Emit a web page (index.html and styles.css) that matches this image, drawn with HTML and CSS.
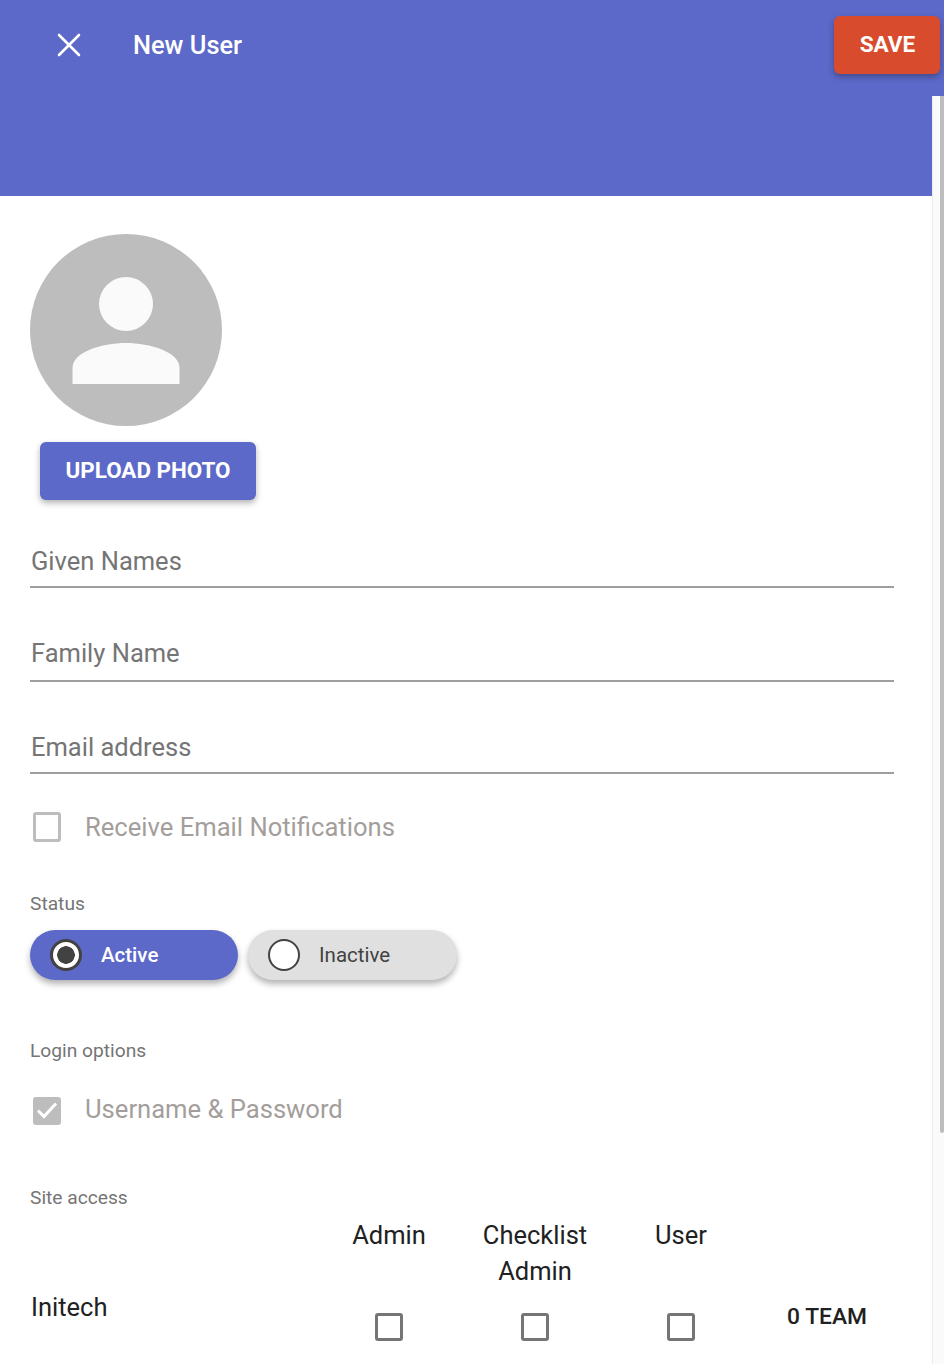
FILE: index.html
```html
<!DOCTYPE html>
<html lang="en">
<head>
    <meta charset="UTF-8">
    <meta name="viewport" content="width=device-width, initial-scale=1.0">
    <title>New User</title>
    <link rel="stylesheet" href="styles.css">
</head>
<body>

    <div class="topbar">
        <svg class="close-icon" width="24" height="24" viewBox="0 0 24 24">
            <path d="M2 2L22 22M22 2L2 22" fill="none" stroke="#fff" stroke-width="2.6" stroke-linecap="round"/>
        </svg>
        <div class="topbar-title">New User</div>
        <button class="save-btn">SAVE</button>
    </div>

    <div class="page">
        <div class="content">
            <div class="band"></div>

            <div class="form">
                <svg class="avatar" width="192" height="192" viewBox="0 0 192 192">
                    <circle cx="96" cy="96" r="96" fill="#bdbdbd"/>
                    <circle cx="96" cy="70" r="27" fill="#fafafa"/>
                    <path d="M42.5 150V134C42.5 118 72 109 96 109S149.5 118 149.5 134V150Z" fill="#fafafa"/>
                </svg>

                <button class="upload-btn">UPLOAD PHOTO</button>

                <div class="field field-given">Given Names</div>
                <div class="field field-family">Family Name</div>
                <div class="field field-email">Email address</div>

                <div class="check-row check-notify">
                    <span class="box box-light"></span>
                    <span class="check-label">Receive Email Notifications</span>
                </div>

                <div class="section-label label-status">Status</div>
                <div class="pills">
                    <div class="pill pill-on">
                        <span class="radio radio-on"></span>
                        Active
                    </div>
                    <div class="pill pill-off">
                        <span class="radio"></span>
                        Inactive
                    </div>
                </div>

                <div class="section-label label-login">Login options</div>
                <div class="check-row check-login">
                    <span class="box box-checked">
                        <svg width="28" height="28" viewBox="0 0 28 28">
                            <path d="M5 13.5L11 19.5L23 6.5" fill="none" stroke="#fff" stroke-width="3"/>
                        </svg>
                    </span>
                    <span class="check-label">Username &amp; Password</span>
                </div>

                <div class="section-label label-site">Site access</div>
                <div class="site-grid">
                    <div></div>
                    <div class="role">Admin</div>
                    <div class="role">Checklist Admin</div>
                    <div class="role">User</div>
                    <div></div>

                    <div class="site-name">Initech</div>
                    <div class="cell"><span class="box box-dark"></span></div>
                    <div class="cell"><span class="box box-dark"></span></div>
                    <div class="cell"><span class="box box-dark"></span></div>
                    <div class="team">0 TEAM</div>
                </div>
            </div>
        </div>

        <div class="scrollbar">
            <div class="thumb"></div>
        </div>
    </div>

</body>
</html>
```

FILE: styles.css
```css
body {
    font-family: Roboto, "Liberation Sans", sans-serif;
    background-color: #fff;
    margin: 0;
    height: 1364px;
    overflow: hidden;
}

button {
    font-family: inherit;
    border: none;
    color: #fff;
    font-weight: 700;
    cursor: pointer;
}

.topbar {
    display: flex;
    align-items: flex-start;
    height: 96px;
    background: #5c69c8;
}

.close-icon {
    margin: 33px 0 0 57px;
}

.topbar-title {
    margin: 27px 0 0 52px;
    font-size: 25.4px;
    line-height: 36px;
    font-weight: 500;
    color: #fff;
}

.save-btn {
    margin: 16px 4px 0 auto;
    width: 106px;
    height: 58px;
    padding: 0 0 2px 1px;
    font-size: 22.6px;
    background: #d84b2d;
    border-radius: 6px;
    box-shadow: 0 3px 6px rgba(0, 0, 0, 0.3);
}

.page {
    display: flex;
    height: 1268px;
}

.content {
    flex: 1;
    overflow: hidden;
}

.band {
    height: 100px;
    background: #5c69c8;
}

.form {
    padding: 38px 38px 0 30px;
}

.avatar {
    display: block;
}

.upload-btn {
    display: block;
    margin: 16px 0 0 10px;
    width: 216px;
    height: 58px;
    padding: 0 0 2px;
    font-size: 22.4px;
    background: #5c69c8;
    border-radius: 6px;
    box-shadow: 0 3px 6px rgba(0, 0, 0, 0.3);
}

.field {
    box-sizing: border-box;
    padding-left: 1px;
    font-size: 25.5px;
    line-height: 36px;
    color: #757575;
    border-bottom: 2px solid #9e9e9e;
}

.field-given {
    margin-top: 43px;
    height: 45px;
}

.field-family {
    margin-top: 47px;
    height: 47px;
}

.field-email {
    margin-top: 46px;
    height: 46px;
    line-height: 38px;
}

.check-row {
    display: flex;
    align-items: center;
    padding-left: 3px;
    height: 36px;
}

.check-notify {
    margin-top: 35px;
}

.check-login {
    margin-top: 26px;
    align-items: flex-start;
    line-height: 36px;
}

.check-login .box {
    margin-top: 6px;
    height: 28px;
}

.check-label {
    margin-left: 24px;
    font-size: 25.6px;
    color: #a39e9b;
}

.box {
    box-sizing: border-box;
    display: block;
    width: 28px;
    height: 30px;
    border-radius: 3px;
}

.box-light {
    border: 3px solid #bdbdbd;
}

.box-checked {
    background: #bdbdbd;
}

.box-checked svg {
    display: block;
}

.box-dark {
    height: 28px;
    border: 3px solid #757575;
}

.section-label {
    font-size: 19.2px;
    line-height: 28px;
    color: #757575;
}

.label-status {
    margin-top: 45px;
}

.label-login {
    margin-top: 57px;
}

.label-site {
    margin-top: 57px;
}

.pills {
    display: flex;
    gap: 10px;
    margin-top: 12px;
}

.pill {
    display: flex;
    align-items: center;
    gap: 19px;
    box-sizing: border-box;
    height: 50px;
    padding-left: 20px;
    border-radius: 25px;
    font-size: 20.5px;
    box-shadow: 0 4px 6px rgba(0, 0, 0, 0.3);
}

.pill-on {
    width: 208px;
    background: #5c69c8;
    color: #fff;
    font-weight: 500;
}

.pill-off {
    width: 209px;
    background: #e0e0e0;
    color: #424242;
}

.radio {
    box-sizing: border-box;
    width: 32px;
    height: 32px;
    border: 2px solid #424242;
    border-radius: 50%;
    background: #fff;
}

.radio-on {
    border-width: 3px;
    background: radial-gradient(circle, #424242 0, #424242 8.5px, #fff 9px);
}

.site-grid {
    display: grid;
    grid-template-columns: 286px repeat(4, 146px);
    grid-template-rows: 72px 60px;
    margin-top: 5px;
}

.role {
    font-size: 25.5px;
    line-height: 36px;
    text-align: center;
    color: #212121;
    padding: 0 16px;
}

.site-name {
    font-size: 25.5px;
    line-height: 36px;
    color: #212121;
    padding-left: 1px;
}

.cell {
    display: flex;
    justify-content: center;
    padding-top: 24px;
}

.team {
    font-size: 22.8px;
    font-weight: 500;
    line-height: 36px;
    text-align: center;
    color: #212121;
    padding-top: 10px;
}

.scrollbar {
    box-sizing: border-box;
    width: 12px;
    background: #fafafa;
    border-left: 1px solid #ececec;
}

.thumb {
    width: 4px;
    height: 1037px;
    margin-left: 7px;
    background: #bdbdbd;
    border-radius: 0 0 4px 4px;
}
```
